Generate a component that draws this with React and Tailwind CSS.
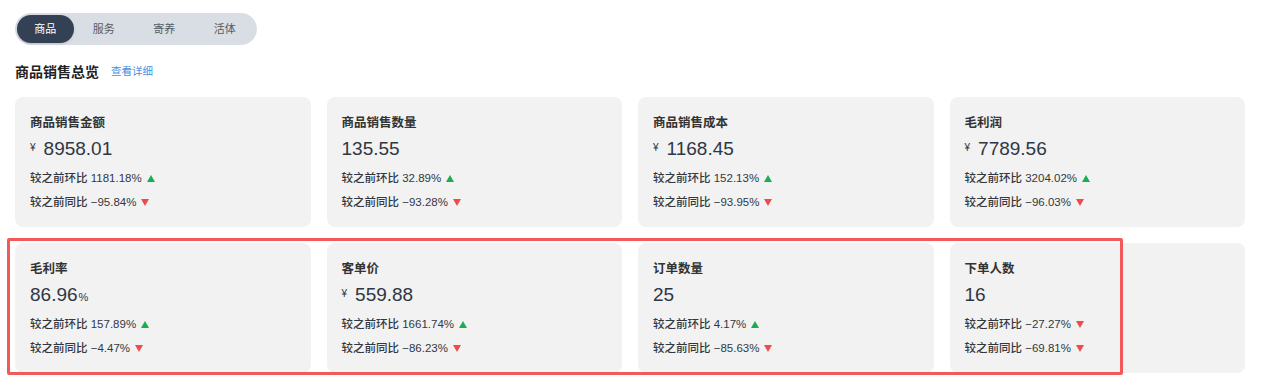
import React from 'react';

const tabs = ['商品', '服务', '寄养', '活体'];

const rows = [
  [
    { title: '商品销售金额', value: '8958.01', prefix: '¥', mom: '1181.18%', momUp: true, yoy: '−95.84%', yoyUp: false },
    { title: '商品销售数量', value: '135.55', mom: '32.89%', momUp: true, yoy: '−93.28%', yoyUp: false },
    { title: '商品销售成本', value: '1168.45', prefix: '¥', mom: '152.13%', momUp: true, yoy: '−93.95%', yoyUp: false },
    { title: '毛利润', value: '7789.56', prefix: '¥', mom: '3204.02%', momUp: true, yoy: '−96.03%', yoyUp: false },
  ],
  [
    { title: '毛利率', value: '86.96', suffix: '%', mom: '157.89%', momUp: true, yoy: '−4.47%', yoyUp: false },
    { title: '客单价', value: '559.88', prefix: '¥', mom: '1661.74%', momUp: true, yoy: '−86.23%', yoyUp: false },
    { title: '订单数量', value: '25', mom: '4.17%', momUp: true, yoy: '−85.63%', yoyUp: false },
    { title: '下单人数', value: '16', mom: '−27.27%', momUp: false, yoy: '−69.81%', yoyUp: false },
  ],
];

function Arrow({ up }) {
  return up ? (
    <span className="ml-[5px] inline-block w-0 h-0 border-l-[4.5px] border-r-[4.5px] border-b-[7px] border-l-transparent border-r-transparent border-b-[#1aad52]" />
  ) : (
    <span className="ml-[5px] inline-block w-0 h-0 border-l-[4.5px] border-r-[4.5px] border-t-[7px] border-l-transparent border-r-transparent border-t-[#f04b4b]" />
  );
}

function StatCard({ item }) {
  return (
    <div className="bg-[#f2f2f2] rounded-[8px] h-[130px] pl-[15px] pt-[17px]">
      <div className="text-[12.5px] leading-[18px] font-semibold text-[#333]">{item.title}</div>
      <div className="flex items-baseline mt-[4px] h-[26px] text-[#2f3744]">
        {item.prefix && <span className="text-[10px] mr-[8px] relative top-[-4px]">{item.prefix}</span>}
        <span className="text-[19px] leading-[26px]">{item.value}</span>
        {item.suffix && <span className="text-[11px] ml-[1px]">{item.suffix}</span>}
      </div>
      <div className="mt-[8px] text-[11.5px] leading-[16px] text-[#33383f] font-medium flex items-center">
        <span>较之前环比 {item.mom}</span>
        <Arrow up={item.momUp} />
      </div>
      <div className="mt-[8px] text-[11.5px] leading-[16px] text-[#33383f] font-medium flex items-center">
        <span>较之前同比 {item.yoy}</span>
        <Arrow up={item.yoyUp} />
      </div>
    </div>
  );
}

export default function App() {
  return (
    <div
      className="w-[1267px] h-[390px] bg-white pl-[15px] pr-[22px] pt-[13px] relative"
      style={{ fontFamily: '"Liberation Sans", "Noto Sans CJK SC", sans-serif' }}
    >
      {/* Tabs */}
      <div className="inline-flex items-center bg-[#d8dee4] rounded-full p-[2px] h-[32px] w-[242px]">
        {tabs.map((t, i) => (
          <div
            key={t}
            className={
              i === 0
                ? 'w-[57px] h-[28px] rounded-full bg-[#344154] text-white text-[11px] flex items-center justify-center shadow-sm'
                : 'w-[61px] h-[28px] text-[#555b63] text-[11px] flex items-center justify-center'
            }
          >
            {t}
          </div>
        ))}
      </div>

      {/* Heading */}
      <div className="flex items-center mt-[16px] h-[22px]">
        <span className="text-[14px] font-bold text-[#222]">商品销售总览</span>
        <span className="ml-[12px] text-[10.5px] text-[#4a90e2]">查看详细</span>
      </div>

      {/* Cards */}
      <div className="mt-[14px] grid grid-cols-4 gap-x-[16px] gap-y-[16px]">
        {rows.flat().map(item => (
          <StatCard key={item.title} item={item} />
        ))}
      </div>

      {/* Highlight box */}
      <div className="absolute left-[7px] top-[238px] w-[1116px] h-[137px] border-[3px] border-[#f25a5a] rounded-[2px] pointer-events-none" />
    </div>
  );
}
